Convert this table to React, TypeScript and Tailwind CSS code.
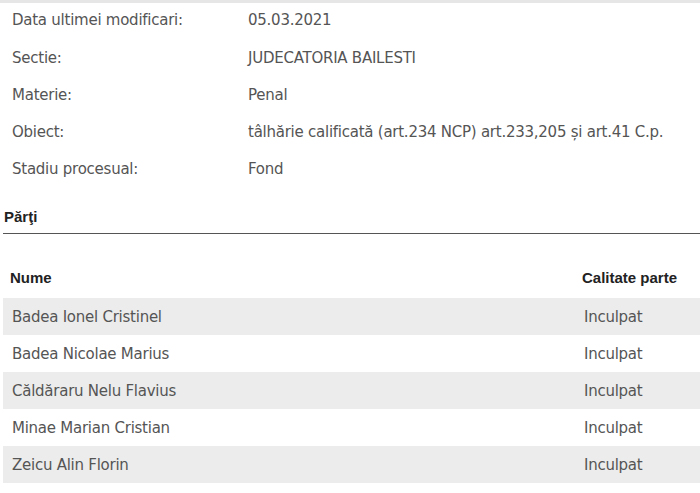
import React from "react";

const info: [string, string][] = [
  ["Data ultimei modificari:", "05.03.2021"],
  ["Sectie:", "JUDECATORIA BAILESTI"],
  ["Materie:", "Penal"],
  ["Obiect:", "tâlhărie calificată (art.234 NCP) art.233,205 și art.41 C.p."],
  ["Stadiu procesual:", "Fond"],
];

const parti = [
  "Badea Ionel Cristinel",
  "Badea Nicolae Marius",
  "Căldăraru Nelu Flavius",
  "Minae Marian Cristian",
  "Zeicu Alin Florin",
];

export default function App() {
  return (
    <div className="w-[700px] h-[493px] bg-white overflow-hidden shadow-[inset_0_3px_0_#e6e6e6]">
      <div className="flex flex-col pt-[2px] font-['DejaVu_Sans',sans-serif] text-[15px] tracking-[-0.25px] text-[#555]">
        {info.map(([k, v]) => (
          <div key={k} className="flex h-[37.25px] items-center">
            <div className="w-[248px] pl-[12px]">{k}</div>
            <div>{v}</div>
          </div>
        ))}
      </div>
      <div className="mt-[19px] ml-[3px] border-b border-[#555] pb-[6px] pl-[1px] font-['Liberation_Sans',sans-serif] text-[15px] font-bold leading-[20px] text-[#222]">
        Părţi
      </div>
      <div className="mt-[24px] ml-[3px]">
        <div className="grid h-[40px] grid-cols-[570px_1fr] items-center font-['Liberation_Sans',sans-serif] text-[15px] font-bold text-[#222]">
          <div className="pl-[7px]">Nume</div>
          <div className="pl-[9px]">Calitate parte</div>
        </div>
        {parti.map((p, i) => (
          <div
            key={p}
            className={`grid h-[37px] grid-cols-[570px_1fr] items-center font-['DejaVu_Sans',sans-serif] text-[15px] tracking-[-0.25px] text-[#555] ${i % 2 === 0 ? "bg-[#ececec]" : "bg-white"}`}
          >
            <div className="pl-[9px]">{p}</div>
            <div className="pl-[11px]">Inculpat</div>
          </div>
        ))}
      </div>
    </div>
  );
}
